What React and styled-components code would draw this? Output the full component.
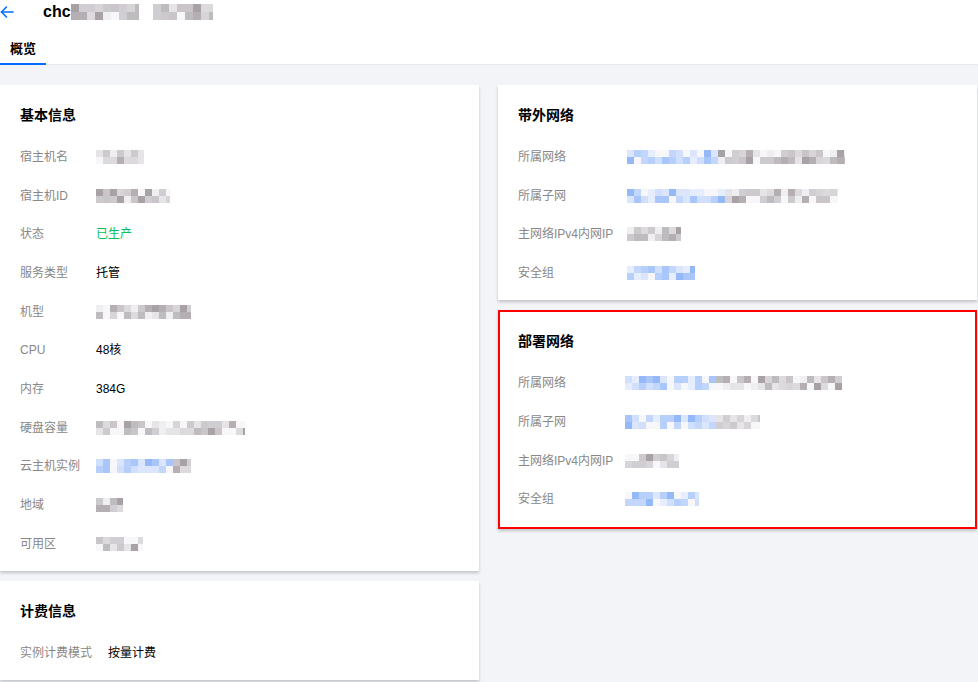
import React from "react";
import styled, { createGlobalStyle } from "styled-components";

const Global = createGlobalStyle`
  html, body { margin: 0; padding: 0; background: #f3f4f7; }
  body { font-family: "Liberation Sans", "Noto Sans CJK SC", sans-serif; font-size: 12px; color: #000; }
  * { box-sizing: border-box; }
`;

const Page = styled.div`
  width: 978px;
  min-height: 682px;
  background: #f3f4f7;
`;

const Header = styled.header`
  background: #fff;
  border-bottom: 1px solid #e6e8ec;
`;

const TitleBar = styled.div`
  height: 24px;
  display: flex;
  align-items: center;
`;

const BackButton = styled.span`
  width: 14px;
  height: 14px;
  display: flex;
  align-items: center;
  color: #006eff;
  margin-right: 29px;
`;

const Title = styled.h1`
  margin: 0;
  font-size: 16px;
  font-weight: bold;
  line-height: 24px;
  display: flex;
  align-items: center;
  gap: 14px;
`;

const TitleId = styled.span`
  display: flex;
  align-items: center;
`;

const TabBar = styled.nav`
  display: flex;
  height: 40px;
`;

const Tab = styled.div`
  padding: 12px 10px 0;
  line-height: 26px;
  font-size: 13px;
  font-weight: bold;
  border-bottom: 2px solid ${(p) => (p.$active ? "#006eff" : "transparent")};
  margin-bottom: -1px;
`;

const Content = styled.main`
  display: grid;
  grid-template-columns: 479px 479px;
  column-gap: 19px;
  padding-top: 20px;
  align-items: start;
`;

const Column = styled.div`
  display: flex;
  flex-direction: column;
  gap: 10px;
`;

const Card = styled.section`
  background: #fff;
  box-shadow: 0 2px 3px 0 rgba(0, 0, 0, 0.2);
  padding: ${(p) => (p.$highlight ? "19px 18px 8px" : "20px 20px 8px")};
  border: ${(p) => (p.$highlight ? "2px solid #ff0000" : "none")};
`;

const CardTitle = styled.h2`
  margin: 0;
  font-size: 14px;
  font-weight: bold;
  line-height: 20px;
`;

const InfoList = styled.ul`
  list-style: none;
  margin: 12.6px 0 0;
  padding: 0;
`;

const InfoRow = styled.li`
  display: flex;
  align-items: center;
  height: 38.7px;
`;

const Label = styled.span`
  flex: 0 0 ${(p) => p.$w}px;
  color: #888;
  font-size: 12px;
  line-height: 18px;
`;

const Value = styled.span`
  color: ${(p) => (p.$tone === "success" ? "#0abf5b" : "#000")};
  font-size: 12px;
  line-height: 18px;
  display: flex;
  align-items: center;
`;

const Masked = styled.span`
  display: inline-block;
  height: ${(p) => p.$h}px;
  width: ${(p) => p.$w}px;
`;

const GREYS = ["#d8d5d9", "#c9c5c9", "#b5afb3", "#e6e4e7", "#a8a2a6", "#d0ced2", "#efeef0", "#bfbcc0", "#dcdadd", "#cdcacd"];
const BLUES = ["#a9c6fb", "#c3d7fc", "#dbe6fd", "#95b8f9", "#b7cffb", "#e6eefd", "#cfdffc"];

function mosaicBg(w, blueFrac, seed, cell) {
  let s = seed;
  const rnd = () => {
    s = (s * 9301 + 49297) % 233280;
    return s / 233280;
  };
  const cols = Math.ceil(w / cell);
  const rows = [0, 1].map(() => {
    const stops = [];
    for (let i = 0; i < cols; i++) {
      const blue = i < cols * blueFrac;
      const pal = blue ? BLUES : GREYS;
      let c = pal[Math.floor(rnd() * pal.length)];
      if (rnd() < 0.15) c = "#f7f7f9";
      stops.push(`${c} ${i * cell}px ${(i + 1) * cell}px`);
    }
    return `linear-gradient(to right, ${stops.join(", ")})`;
  });
  return `${rows[0]} top / 100% 50% no-repeat, ${rows[1]} bottom / 100% 50% no-repeat`;
}

const Mask = ({ w, blue = 0, seed = 1, h = 14 }) => (
  <Masked $w={w} $h={h} style={{ background: mosaicBg(w, blue, seed, h / 2) }} />
);

const ArrowLeft = () => (
  <svg width="14" height="14" viewBox="0 0 14 14" fill="none" stroke="currentColor" strokeWidth="1.6" strokeLinecap="round" strokeLinejoin="round">
    <path d="M13 7H1.5" />
    <path d="M6.5 2L1.5 7l5 5" />
  </svg>
);

const basic = [
  ["宿主机名", <Mask w={48} seed={3} />],
  ["宿主机ID", <Mask w={74} seed={7} />],
  ["状态", "已生产", "success"],
  ["服务类型", "托管"],
  ["机型", <Mask w={95} seed={11} />],
  ["CPU", "48核"],
  ["内存", "384G"],
  ["硬盘容量", <Mask w={149} seed={13} />],
  ["云主机实例", <Mask w={95} blue={0.72} seed={17} />],
  ["地域", <Mask w={27} seed={19} />],
  ["可用区", <Mask w={47} seed={23} />],
];

const oob = [
  ["所属网络", <Mask w={218} blue={0.4} seed={29} />],
  ["所属子网", <Mask w={211} blue={0.45} seed={31} />],
  ["主网络IPv4内网IP", <Mask w={54} seed={37} />],
  ["安全组", <Mask w={68} blue={1} seed={41} />],
];

const deploy = [
  ["所属网络", <Mask w={217} blue={0.4} seed={43} />],
  ["所属子网", <Mask w={135} blue={0.65} seed={47} />],
  ["主网络IPv4内网IP", <Mask w={54} seed={53} />],
  ["安全组", <Mask w={74} blue={1} seed={59} />],
];

const billing = [["实例计费模式", "按量计费"]];

const InfoCard = ({ title, rows, labelWidth, highlight }) => (
  <Card $highlight={highlight}>
    <CardTitle>{title}</CardTitle>
    <InfoList>
      {rows.map(([label, value, tone]) => (
        <InfoRow key={label}>
          <Label $w={labelWidth}>{label}</Label>
          <Value $tone={tone}>{value}</Value>
        </InfoRow>
      ))}
    </InfoList>
  </Card>
);

export default function App() {
  return (
    <Page>
      <Global />
      <Header>
        <TitleBar>
          <BackButton>
            <ArrowLeft />
          </BackButton>
          <Title>
            <TitleId>
              chc
              <Mask w={68} seed={5} h={16} />
            </TitleId>
            <Mask w={60} seed={9} h={16} />
          </Title>
        </TitleBar>
        <TabBar>
          <Tab $active>概览</Tab>
        </TabBar>
      </Header>
      <Content>
        <Column>
          <InfoCard title="基本信息" rows={basic} labelWidth={76} />
          <InfoCard title="计费信息" rows={billing} labelWidth={88} />
        </Column>
        <Column>
          <InfoCard title="带外网络" rows={oob} labelWidth={109} />
          <InfoCard title="部署网络" rows={deploy} labelWidth={107} highlight />
        </Column>
      </Content>
    </Page>
  );
}
